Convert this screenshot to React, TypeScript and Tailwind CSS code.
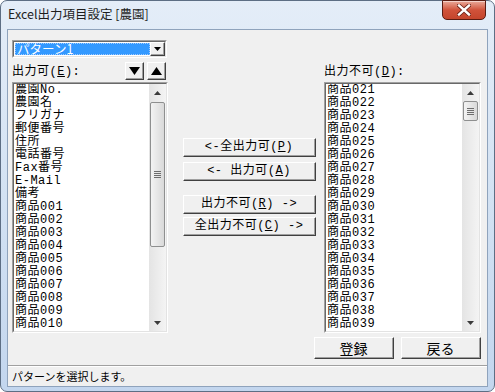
const MONO = "font-['Liberation_Mono','Noto_Sans_CJK_JP',monospace] text-[12px] tracking-[0.5px]";
const UI = "font-['Noto_Sans_CJK_JP','Noto_Sans',sans-serif]";

const LEFT_ITEMS = [
  '農園No.',
  '農園名',
  'フリガナ',
  '郵便番号',
  '住所',
  '電話番号',
  'Fax番号',
  'E-Mail',
  '備考',
  '商品001',
  '商品002',
  '商品003',
  '商品004',
  '商品005',
  '商品006',
  '商品007',
  '商品008',
  '商品009',
  '商品010',
];

const RIGHT_ITEMS = Array.from({ length: 19 }, (_, i) => `商品0${21 + i}`);

function Grip() {
  return (
    <div className="flex flex-col gap-[1px]">
      <div className="h-[1px] w-[7px] bg-[#6d6d6d]" />
      <div className="h-[1px] w-[7px] bg-[#6d6d6d]" />
      <div className="h-[1px] w-[7px] bg-[#6d6d6d]" />
      <div className="h-[1px] w-[7px] bg-[#6d6d6d]" />
    </div>
  );
}

function ScrollBar({ thumb }: { thumb: string }) {
  return (
    <div className="flex w-[17px] flex-col bg-gradient-to-r from-[#e4e4e4] to-[#f4f4f4]">
      <div className="flex h-[17px] items-center justify-center">
        <svg width="7" height="4" viewBox="0 0 7 4">
          <path d="M0 4 L3.5 0 L7 4 Z" fill="#3c3c3c" />
        </svg>
      </div>
      <div className="flex flex-1 flex-col">
        <div
          className={`${thumb} mx-[1px] flex items-center justify-center rounded-[2px] border border-[#8e8f8f] bg-gradient-to-r from-[#f3f3f3] to-[#d9d9d9]`}
        >
          <Grip />
        </div>
      </div>
      <div className="flex h-[17px] items-center justify-center">
        <svg width="7" height="4" viewBox="0 0 7 4">
          <path d="M0 0 L3.5 4 L7 0 Z" fill="#3c3c3c" />
        </svg>
      </div>
    </div>
  );
}

function Sunken({ className, children }: { className: string; children: React.ReactNode }) {
  return (
    <div className={`${className} border border-b-white border-l-[#a0a0a0] border-r-white border-t-[#a0a0a0]`}>
      <div className="flex h-full w-full border border-b-[#e3e3e3] border-l-[#696969] border-r-[#e3e3e3] border-t-[#696969] bg-white">
        {children}
      </div>
    </div>
  );
}

function ListBox({ items, thumb }: { items: string[]; thumb: string }) {
  return (
    <Sunken className="h-[251px] w-full">
      <div className={`${MONO} flex-1 overflow-hidden pl-[1px] leading-[13px] text-black`}>
        {items.map((t) => (
          <div key={t} className="h-[13px] whitespace-pre">
            {t}
          </div>
        ))}
      </div>
      <ScrollBar thumb={thumb} />
    </Sunken>
  );
}

function Btn({ className, children }: { className: string; children: React.ReactNode }) {
  return (
    <div className={`${className} border border-b-[#404040] border-l-white border-r-[#404040] border-t-white`}>
      <div className="flex h-full w-full items-center justify-center border-b border-r border-[#a0a0a0] bg-[#f0f0f0] whitespace-pre text-black">
        {children}
      </div>
    </div>
  );
}

export default function App() {
  return (
    <div className="h-[392px] w-[495px] overflow-hidden bg-white">
      <div className="flex h-[392px] w-[495px] flex-col rounded-[7px] border border-[#5d6e84] bg-gradient-to-b from-[#e4edf8] via-[#d3e2f3] to-[#c3d6ee]">
        {/* title bar */}
        <div className="flex h-[28px] items-start justify-between">
          <div className={`${UI} pl-[7px] pt-[5px] text-[12.5px] leading-[16px] text-[#1e1e1e]`}>Excel出力項目設定 [農園]</div>
          <div className="mr-[8px] -mt-[1px] flex h-[20px] w-[44px] items-center justify-center rounded-b-[5px] border border-[#5a1c12] bg-gradient-to-b from-[#e9a99a] via-[#d0523a] to-[#c4452c] shadow-[inset_0_1px_0_rgba(255,255,255,0.5)]">
            <svg width="14" height="12" viewBox="0 0 14 12">
              <path d="M2 1.5 L12 10.5 M12 1.5 L2 10.5" stroke="#6a2015" strokeWidth="4" strokeLinecap="square" />
              <path d="M2 1.5 L12 10.5 M12 1.5 L2 10.5" stroke="#ffffff" strokeWidth="2.4" strokeLinecap="square" />
            </svg>
          </div>
        </div>

        {/* client area */}
        <div className="mx-[6px] flex flex-col border border-[#8fa3bc] bg-[#f0f0f0]">
          <div className="pl-[4px] pt-[10px]">
            <Sunken className="h-[18px] w-[155px]">
              <div className="flex flex-1 items-center pl-[1px]">
                <div className={`${UI} flex h-[12px] w-[135px] items-center border border-dotted border-[#9fcaff] bg-[#3399ff] pl-[1px] text-[12.5px] leading-[12px] text-white`}>
                  パターン1
                </div>
              </div>
              <Btn className="h-full w-[16px]">
                <svg width="7" height="4" viewBox="0 0 7 4">
                  <path d="M0 0 L3.5 4 L7 0 Z" fill="#000" />
                </svg>
              </Btn>
            </Sunken>
          </div>

          <div className="mt-[3px] flex pl-[4px]">
            {/* left column */}
            <div className="flex w-[156px] flex-col">
              <div className="flex h-[21px] items-start justify-between">
                <div className={`${MONO} pt-[3px] leading-[16px] text-black`}>
                  出力可(<span className="underline">E</span>):
                </div>
                <div className="mr-[2px] mt-[1px] flex gap-[3px]">
                  <Btn className="h-[18px] w-[19px]">
                    <svg width="11" height="8" viewBox="0 0 11 8">
                      <path d="M0 0 L11 0 L5.5 8 Z" fill="#000" />
                    </svg>
                  </Btn>
                  <Btn className="h-[18px] w-[19px]">
                    <svg width="11" height="8" viewBox="0 0 11 8">
                      <path d="M0 8 L11 8 L5.5 0 Z" fill="#000" />
                    </svg>
                  </Btn>
                </div>
              </div>
              <ListBox items={LEFT_ITEMS} thumb="mt-[1px] h-[145px]" />
            </div>

            {/* middle buttons */}
            <div className={`${MONO} ml-[15px] flex w-[133px] flex-col pt-[77px] leading-[15px]`}>
              <Btn className="h-[19px] w-full">
                {'<-全出力可('}
                <span className="underline">P</span>)
              </Btn>
              <Btn className="mt-[5px] h-[19px] w-full">
                {'<- 出力可('}
                <span className="underline">A</span>)
              </Btn>
              <Btn className="mt-[14px] h-[19px] w-full">
                出力不可(<span className="underline">R</span>
                {') ->'}
              </Btn>
              <Btn className="mt-[3px] h-[19px] w-full">
                全出力不可(<span className="underline">C</span>
                {') ->'}
              </Btn>
            </div>

            {/* right column */}
            <div className="ml-[8px] flex w-[157px] flex-col">
              <div className="flex h-[21px] items-start">
                <div className={`${MONO} pt-[3px] leading-[16px] text-black`}>
                  出力不可(<span className="underline">D</span>):
                </div>
              </div>
              <ListBox items={RIGHT_ITEMS} thumb="h-[20px]" />
            </div>
          </div>

          <div className={`${UI} mt-[4px] flex justify-end gap-[7px] pr-[6px] text-[14px] leading-[16px]`}>
            <Btn className="h-[22px] w-[80px]">登録</Btn>
            <Btn className="h-[22px] w-[80px]">戻る</Btn>
          </div>

          <div className="mt-[6px] h-[2px] border-b border-t border-b-white border-t-[#a0a0a0]" />
          <div className={`${UI} flex h-[19px] items-center pl-[4px] text-[11px] text-black`}>パターンを選択します。</div>
        </div>
      </div>
    </div>
  );
}
